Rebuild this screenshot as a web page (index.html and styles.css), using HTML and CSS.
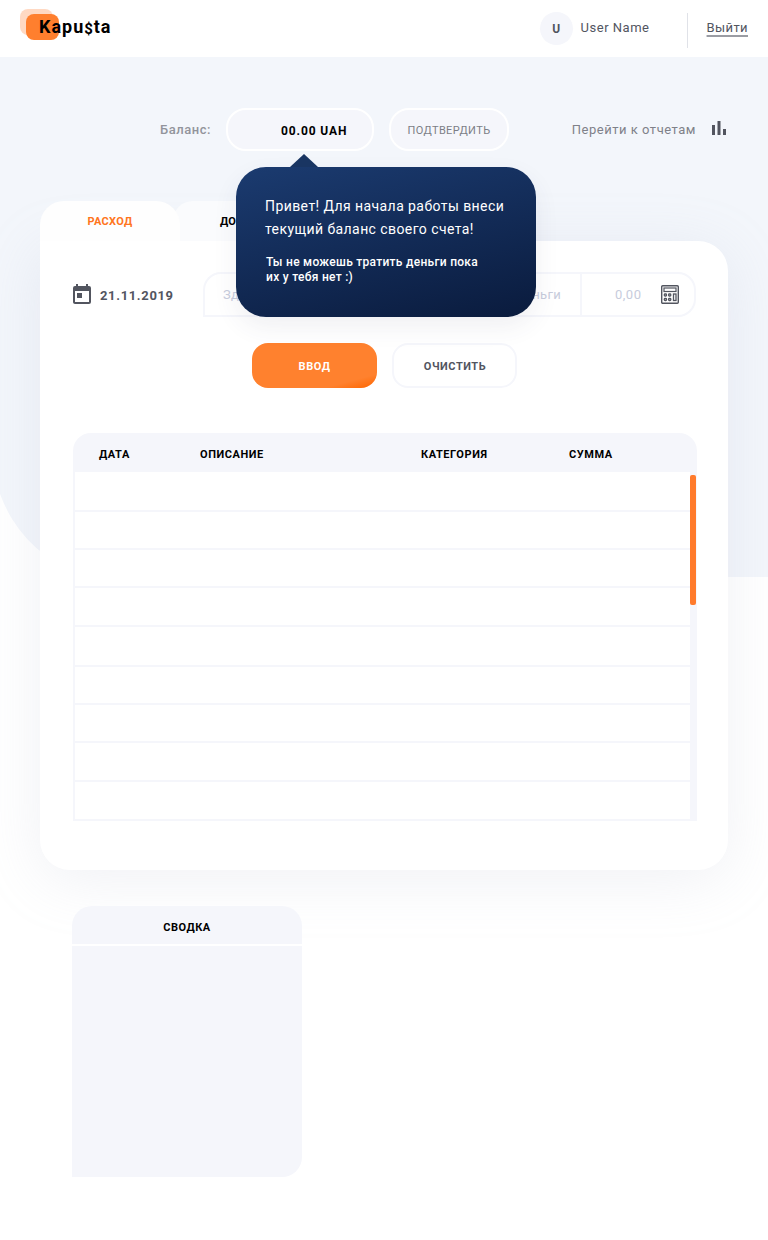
FILE: index.html
```html
<!DOCTYPE html>
<html lang="ru">
<head>
<meta charset="utf-8">
<title>Kapusta</title>
<link rel="stylesheet" href="styles.css">
</head>
<body>
<header class="header">
  <a class="logo">
    <svg class="logo-mark" width="39" height="31" viewBox="0 0 39 31"><rect width="33" height="26" rx="8" fill="#ffd9c3"/><rect x="6" y="5" width="33" height="26" rx="8" fill="#ff7f2e"/></svg>
    <span class="logo-text">Kapu<span class="logo-dollar">$</span>ta</span>
  </a>
  <div class="user">
    <span class="avatar">U</span>
    <span class="user-name">User Name</span>
    <a class="logout">Выйти</a>
  </div>
</header>
<main class="page">
  <div class="backdrop"></div>
  <section class="balance">
    <span class="balance-label">Баланс:</span>
    <div class="balance-field">
      <span class="balance-value">00.00 UAH</span>
      <div class="tip">
        <p class="tip-main">Привет! Для начала работы внеси текущий баланс своего счета!</p>
        <p class="tip-note">Ты не можешь тратить деньги пока<br>их у тебя нет :)</p>
      </div>
    </div>
    <button class="confirm">ПОДТВЕРДИТЬ</button>
    <a class="reports"><span>Перейти к отчетам</span>
      <svg width="14" height="14" viewBox="0 0 14 14" fill="#52555f"><path d="M0 4h3v10H0zM5.500 0h3v14h-3zM11 8h3v6h-3z"/></svg>
    </a>
  </section>
  <nav class="tabs">
    <a class="tab tab-active">РАСХОД</a>
    <a class="tab">ДОХОД</a>
  </nav>
  <section class="card">
    <form class="entry">
      <div class="date">
        <svg width="18" height="20" viewBox="0 0 18 20" fill="#52555f"><path fill-rule="evenodd" d="M16 2h-1V0h-2v2H5V0H3v2H2a2 2 0 0 0-2 2v14c0 1.100.9 2 2 2h14a2 2 0 0 0 2-2V4a2 2 0 0 0-2-2zm0 16H2V7h14zM4 9h5v5H4z"/></svg>
        <span>21.11.2019</span>
      </div>
      <div class="fields">
        <div class="field-name"><span>Здесь ты будешь вносить на что ты</span><span>тратишь деньги</span></div>
        <div class="field-sum"><span>0,00</span>
          <svg width="18" height="19" viewBox="0 0 18 19" fill="none" stroke="#52555f"><rect x=".7" y=".7" width="16.600" height="17.600" rx="1" stroke-width="1.400"/><rect x="3" y="3" width="12" height="3.500" stroke-width="1.200"/><g stroke-width="1.300"><rect x="3.300" y="9" width="2.200" height="2" rx=".8"/><rect x="7.600" y="9" width="2.200" height="2" rx=".8"/><rect x="3.300" y="13.500" width="2.200" height="2" rx=".8"/><rect x="7.600" y="13.500" width="2.200" height="2" rx=".8"/><rect x="12.500" y="9" width="2.500" height="6.500"/></g></svg>
        </div>
      </div>
    </form>
    <div class="actions"><button class="btn btn-primary">ВВОД</button><button class="btn btn-clear">ОЧИСТИТЬ</button></div>
    <div class="table">
      <div class="thead"><span>ДАТА</span><span>ОПИСАНИЕ</span><span>КАТЕГОРИЯ</span><span>СУММА</span></div>
      <div class="tbody">
        <div class="rows">
          <div class="row row-tall"></div><div class="row"></div><div class="row"></div>
          <div class="row row-mid"></div><div class="row row-tall"></div><div class="row"></div>
          <div class="row"></div><div class="row row-mid"></div><div class="row row-mid"></div>
        </div>
        <div class="track"><div class="thumb"></div></div>
      </div>
    </div>
  </section>
  <section class="summary"><h2 class="summary-title">СВОДКА</h2><div class="summary-body"></div></section>
</main>
</body>
</html>
```
FILE: styles.css
```css
* { box-sizing: border-box; }
body { margin: 0; background: #fff; font-family: Roboto, "Noto Sans", sans-serif; color: #000; }
button { font-family: inherit; padding: 0; }
svg { display: block; flex: none; }
.header { height: 57px; padding: 0 20px; display: flex; justify-content: space-between; background: #fff; }
.logo { position: relative; padding-top: 9px; }
.logo-text { position: absolute; left: 19px; top: 16px; font-size: 18px; line-height: 22px; font-weight: 700; letter-spacing: .98px; white-space: nowrap; }
.logo-dollar { position: relative; top: 1px; font-size: 15px; }
.user { display: flex; align-items: flex-start; color: #52555f; font-size: 13px; letter-spacing: .52px; line-height: 16px; }
.avatar { width: 33px; height: 33px; margin-top: 12px; padding-left: 1px; border-radius: 50%; background: #f5f6fb; text-align: center; line-height: 34px; font-size: 12px; font-weight: 700; }
.user-name { margin: 20px 0 0 8px; width: 106px; }
.logout { margin-top: 13px; height: 35px; border-left: 1px solid #e0e2e8; padding: 7px 0 0 19px; text-decoration: underline; text-decoration-color: #9a9ca3; text-decoration-thickness: 1.500px; text-underline-offset: 3px; letter-spacing: .4px; }

.page { position: relative; height: 1183px; }
.backdrop { position: absolute; z-index: -1; left: -8px; right: 0; top: 0; height: 520px; background: #f3f6fb; border-bottom-left-radius: 120px 130px; }
.balance { display: flex; align-items: flex-start; padding: 51px 42px 0 160px; height: 144px; }
.balance-label { width: 66px; margin-top: 14px; font-size: 13px; line-height: 16px; font-weight: 500; letter-spacing: .52px; color: #92949b; white-space: nowrap; }
.balance-field { position: relative; width: 148px; height: 43px; border: 2px solid #fff; border-radius: 20px; background: #f5f6fb; padding-left: 53px; line-height: 42px; font-size: 12px; font-weight: 700; letter-spacing: .88px; }
.balance-value { font-weight: 700; }
.confirm { width: 120px; height: 43px; margin-left: 15px; border: 2px solid #fff; border-radius: 20px; background: #f5f6fb; color: #7c7e86; font-size: 11px; line-height: 41px; letter-spacing: .35px; }
.reports { margin: 12px 0 0 auto; display: flex; gap: 16px; font-size: 13px; line-height: 19px; letter-spacing: .52px; color: #7f8189; white-space: nowrap; }
.reports svg { margin-top: 1px; }
.tip { position: absolute; z-index: 3; left: 8px; top: 57px; width: 300px; height: 150px; border-radius: 30px; padding: 28px 29px; background: linear-gradient(167deg, #1b3b70 0%, #0a1b3d 100%); box-shadow: 0 10px 24px rgba(60,70,100,.08); color: #fff; font-weight: 400; }
.tip::before { content: ""; position: absolute; left: 54px; top: -13px; border: 14px solid transparent; border-top: 0; border-bottom: 13px solid #193562; }
.tip p { margin: 0; white-space: nowrap; }
.tip .tip-main { white-space: normal; width: 250px; font-size: 14px; line-height: 23px; letter-spacing: .42px; }
.tip .tip-note { margin: 14px 0 0 1px; font-size: 12px; line-height: 15px; letter-spacing: .28px; font-weight: 500; }

.tabs { display: flex; padding-left: 40px; height: 40px; }
.tab { width: 138px; height: 40px; margin-left: -7px; padding-right: 5px; border-radius: 20px 20px 0 0; background: #fafbfd; font-size: 11px; line-height: 41px; font-weight: 700; letter-spacing: .2px; text-align: center; }
.tab-active { position: relative; z-index: 1; width: 140px; margin: 0; padding: 0; border-radius: 24px 24px 0 0; background: #fefefe; color: #ff751d; letter-spacing: .3px; }
.card { margin: 0 40px; height: 629px; padding: 31px 31px 0 33px; background: #fff; border-radius: 0 30px 30px 30px; box-shadow: 0 10px 60px rgba(170,178,197,.18); }
.entry { display: flex; height: 45px; }
.date { width: 130px; padding-top: 12px; display: flex; gap: 9px; color: #52555f; font-size: 13px; line-height: 23px; font-weight: 700; letter-spacing: .65px; }
.fields { display: flex; width: 493px; color: #c7ccdc; font-size: 13px; line-height: 41px; letter-spacing: .3px; }
.field-name { width: 377px; display: flex; justify-content: space-between; border: 2px solid #f5f6fb; border-right: 0; border-radius: 18px 0 0 0; padding: 0 19px 0 18px; }
.field-sum { width: 116px; display: flex; align-items: center; justify-content: space-between; border: 2px solid #f5f6fb; border-radius: 0 18px 18px 0; padding: 0 15px 0 33px; letter-spacing: .5px; }
.actions { display: flex; gap: 15px; padding: 26px 0 0 179px; height: 116px; }
.btn { width: 125px; height: 45px; border-radius: 16px; padding-top: 2px; font-size: 11px; font-weight: 700; letter-spacing: .55px; }
.btn-primary { border: 0; background: linear-gradient(165deg, #ff812e 82%, #ff6b08 96%); color: #fff; }
.btn-clear { border: 2px solid #f5f6fb; background: #fff; color: #52555f; padding-left: 1px; }
.table { width: 624px; }
.thead { height: 39px; display: grid; grid-template-columns: 101px 221px 148px 1fr; padding-left: 26px; background: #f5f6fb; border-radius: 18px 18px 0 0; font-size: 11px; line-height: 43px; font-weight: 700; letter-spacing: .55px; }
.tbody { display: flex; }
.rows { width: 617px; border-left: 2px solid #f5f6fb; }
.row { height: 38px; border-bottom: 2px solid #f5f6fb; }
.row-mid { height: 39px; }
.row-tall { height: 40px; }
.track { width: 7px; padding-top: 3px; background: #f5f6fb; }
.thumb { width: 6px; height: 130px; border-radius: 2px; background: #ff7b2c; }
.summary { position: relative; margin: 36px 0 0 72px; width: 230px; height: 271px; border-radius: 20px 20px 20px 0; overflow: hidden; background: #f5f6fb; }
.summary-title { margin: 0; height: 40px; border-bottom: 2px solid #fff; text-align: center; font-size: 11px; line-height: 43px; font-weight: 700; letter-spacing: .55px; }
```
